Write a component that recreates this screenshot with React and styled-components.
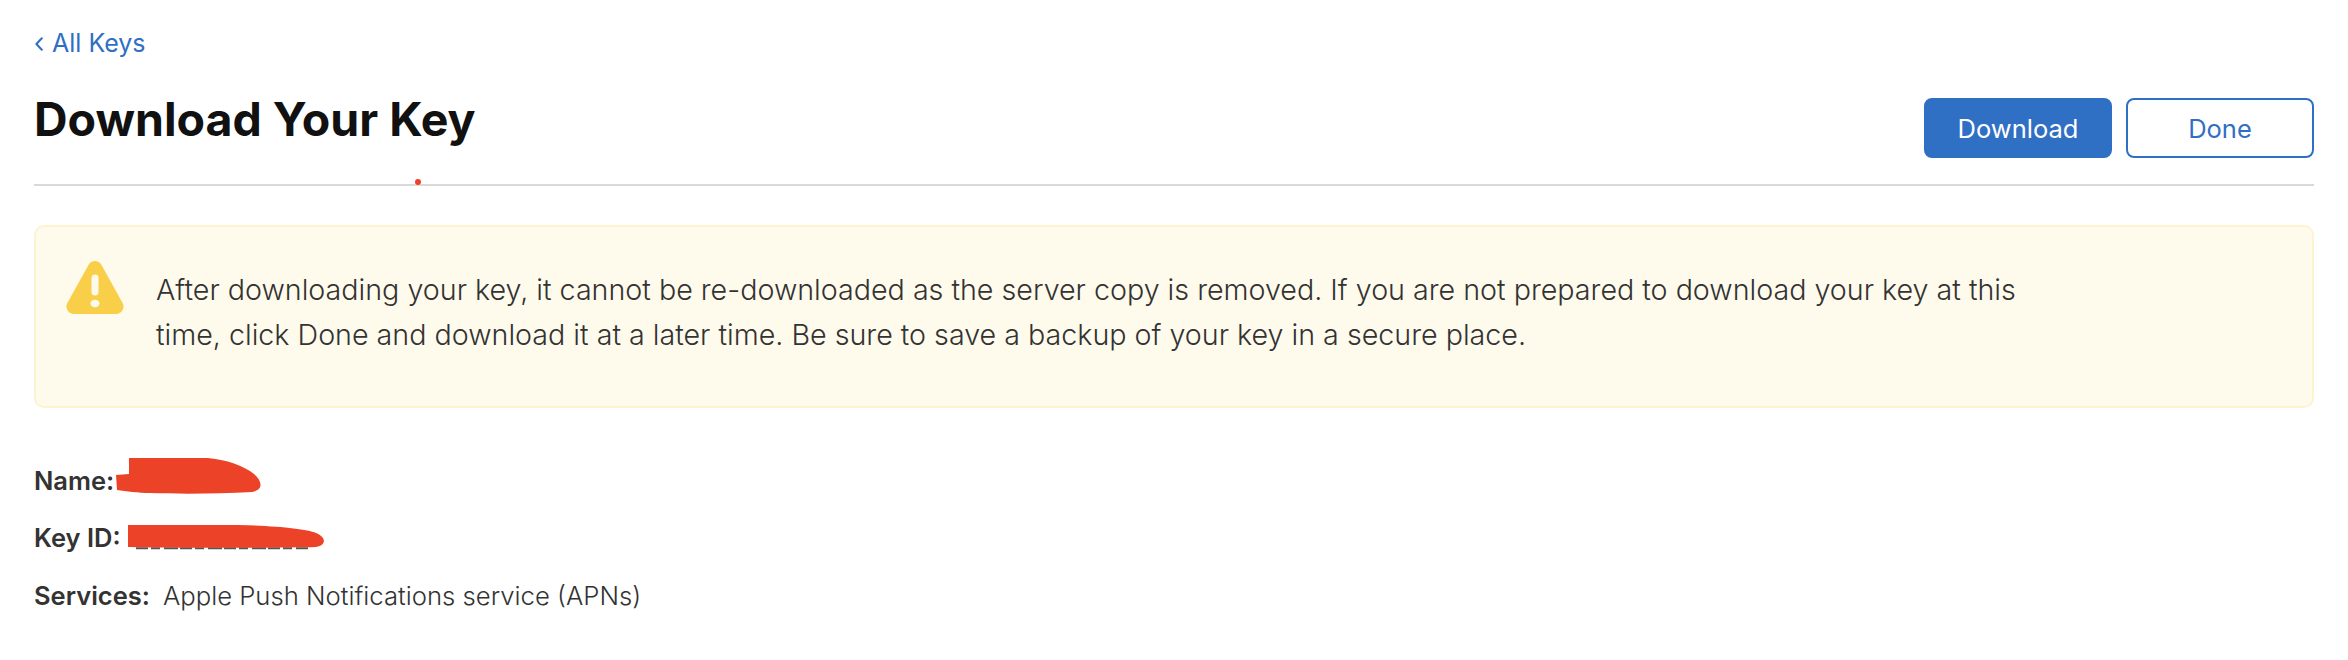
import React from 'react';
import styled, { createGlobalStyle } from 'styled-components';

const GlobalStyle = createGlobalStyle`
  html, body {
    margin: 0;
    background: #fff;
    font-family: Inter, "Liberation Sans", sans-serif;
  }
`;

const BLUE = '#2f6fc4';
const MARKER = '#ec4227';

export default function App() {
  return (
    <>
      <GlobalStyle />
      <Page>
        <BackLink>
          <Chevron viewBox="0 0 8 14" fill="none">
            <path d="M6.800 1.200 1.400 7l5.400 5.800" stroke={BLUE} strokeWidth="2" strokeLinecap="round" strokeLinejoin="round" />
          </Chevron>
          All Keys
        </BackLink>
        <Header>
          <Title>Download Your Key</Title>
          <Actions>
            <Button $primary>Download</Button>
            <Button>Done</Button>
          </Actions>
          <RedDot />
        </Header>
        <Banner>
          <WarningIcon viewBox="0 0 58 53">
            <path d="M22.6 3.7C25.4-1.2 32.6-1.2 35.4 3.7L56.6 42c2.7 4.9-.8 11-6.4 11H7.800C2.200 53-1.300 46.900 1.400 42Z" fill="#f9cf4a" />
            <rect x="25.500" y="13.500" width="7" height="21" rx="3.500" fill="#fefaeb" />
            <ellipse cx="29" cy="42.500" rx="4.500" ry="3.800" fill="#fefaeb" />
          </WarningIcon>
          <BannerText>
            After downloading your key, it cannot be re-downloaded as the server copy is removed. If you are not prepared to download your key at this
            time, click Done and download it at a later time. Be sure to save a backup of your key in a secure place.
          </BannerText>
        </Banner>
        <Details>
          <Row>
            <Label>Name:</Label>
            <NameScribble viewBox="0 0 146 36">
              <path d="M0 17 13 16V0H92C112 2 128 8 138 16 147 24 147 32 136 34 100 36 60 36 34 35 22 35 10 33 1 32Z" fill={MARKER} />
            </NameScribble>
          </Row>
          <Row>
            <Label>Key ID:</Label>
            <KeyScribble viewBox="0 0 197 26">
              <path d="M8 23.200H180" stroke="#555" strokeWidth="2" strokeDasharray="12 3 9 4 14 2" fill="none" />
              <path d="M0 0H110C150 1 178 4 188 8 198 12 199 20 188 22 150 23 40 23 0 22Z" fill={MARKER} />
            </KeyScribble>
          </Row>
          <Row>
            <Label>Services:</Label>
            <Value>Apple Push Notifications service (APNs)</Value>
          </Row>
        </Details>
      </Page>
    </>
  );
}

const Page = styled.div`
  width: 2280px;
  height: 660px;
  padding: 0 34px;
  overflow: hidden;
`;

const BackLink = styled.a`
  display: flex;
  align-items: center;
  gap: 9px;
  height: 30px;
  padding-top: 28px;
  color: ${BLUE};
  font-size: 25px;
`;

const Chevron = styled.svg`
  flex: none;
  width: 8px;
  height: 14px;
  margin: 2px 0 0 1px;
`;

const Header = styled.div`
  position: relative;
  display: flex;
  align-items: flex-start;
  justify-content: space-between;
  height: 126px;
  border-bottom: 2px solid #d9d9d9;
`;

const Title = styled.h1`
  margin: 0;
  padding-top: 33px;
  font-size: 46.5px;
  line-height: 56px;
  font-weight: 700;
  color: #111111;
`;

const Actions = styled.div`
  display: flex;
  gap: 14px;
  padding-top: 40px;
`;

const Button = styled.button`
  width: 188px;
  height: 60px;
  box-sizing: border-box;
  border: 2px solid ${BLUE};
  border-radius: 8px;
  background: ${p => (p.$primary ? BLUE : '#fff')};
  color: ${p => (p.$primary ? '#fff' : BLUE)};
  font-family: inherit;
  font-size: 25.5px;
`;

const RedDot = styled.span`
  position: absolute;
  left: 381px;
  bottom: -1px;
  width: 6px;
  height: 6px;
  border-radius: 50%;
  background: ${MARKER};
`;

const Banner = styled.div`
  display: flex;
  box-sizing: border-box;
  height: 183px;
  margin-top: 39px;
  padding: 34px 30px;
  gap: 32px;
  background: #fffbec;
  border: 2px solid #fdf3d0;
  border-radius: 10px;
`;

const WarningIcon = styled.svg`
  flex: none;
  width: 58px;
  height: 53px;
`;

const BannerText = styled.p`
  margin: 6px 0 0;
  width: 1920px;
  font-size: 28.65px;
  line-height: 45px;
  font-weight: 300;
  color: #333333;
`;

const Details = styled.div`
  display: flex;
  flex-direction: column;
  gap: 23px;
  margin-top: 55px;
`;

const Row = styled.div`
  display: flex;
  align-items: center;
  height: 34px;
  font-size: 25.5px;
  color: #333333;

  & + & + & {
    margin-top: 1px;
  }
`;

const Label = styled.span`
  font-weight: 600;
  margin-right: 13px;
`;

const Value = styled.span`
  font-size: 25.7px;
  font-weight: 300;
`;

const NameScribble = styled.svg`
  flex: none;
  width: 146px;
  height: 36px;
  margin: 0 0 8px -11px;
`;

const KeyScribble = styled.svg`
  flex: none;
  width: 197px;
  height: 26px;
  margin: 2px 0 0 -6px;
`;
